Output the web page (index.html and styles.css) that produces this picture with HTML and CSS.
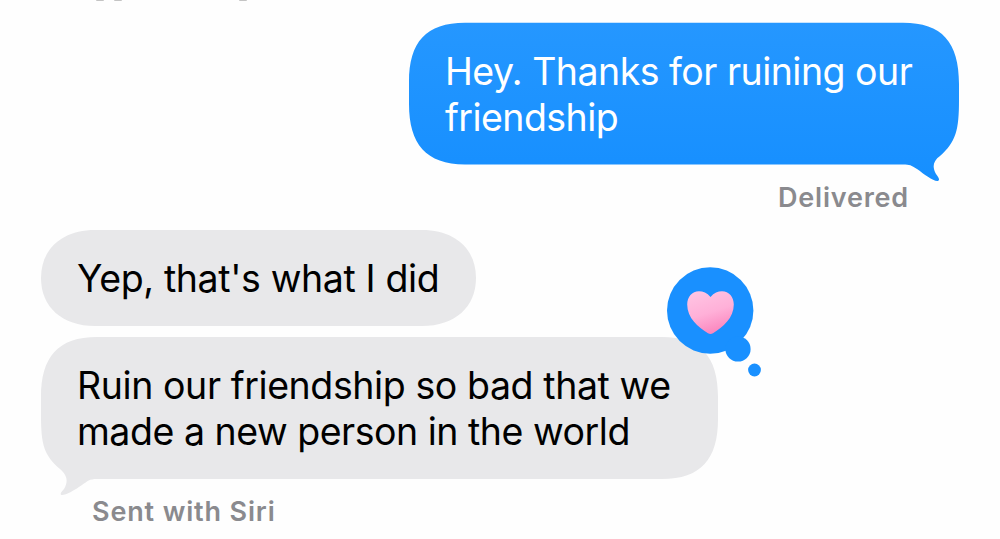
FILE: index.html
```html
<!DOCTYPE html>
<html lang="en">
<head>
    <meta charset="UTF-8">
    <meta name="viewport" content="width=device-width, initial-scale=1.0">
    <title>Messages</title>
    <link rel="stylesheet" href="styles.css">
</head>
<body>
    <div class="scroll-edge">
        <span class="edge-mark"></span>
        <span class="edge-mark"></span>
        <span class="edge-mark edge-mark-far"></span>
    </div>
    <main class="chat">
        <div class="bubble sent">
            <svg class="bubble-shape" width="550" height="160" viewBox="0 0 550 160">
                <defs>
                    <linearGradient id="blue" x1="0" y1="0" x2="0" y2="1">
                        <stop offset="0" stop-color="#2597ff"/>
                        <stop offset="1" stop-color="#168fff"/>
                    </linearGradient>
                </defs>
                <path fill="url(#blue)" d="M56 .7H494C533 .7 550 20 550 62V78C550 108 547 120 531 134C524 139 523 145 527 152C530 156 531 158 529 159C525 160 515 152 508 147C502 143 501 142.4 494 142.4H56C17 142.4 0 122 0 82V60C0 20 17 .7 56 .7Z"/>
            </svg>
            <p class="text">
                <span class="line line-hey">Hey. Thanks for ruining our</span>
                <span class="line line-friend">friendship</span>
            </p>
        </div>
        <p class="caption delivered">Delivered</p>

        <div class="bubble received short">
            <svg class="bubble-shape" width="435" height="96" viewBox="0 0 435 96">
                <path fill="#e8e8ea" d="M54 0H381C414 0 435 19 435 48S414 96 381 96H54C21 96 0 77 0 48S21 0 54 0Z"/>
            </svg>
            <p class="text"><span class="line line-yep">Yep, that's what I did</span></p>
        </div>

        <div class="bubble received long">
            <svg class="bubble-shape" width="677" height="160" viewBox="0 0 677 160">
                <path fill="#e8e8ea" d="M56 0H621C660 0 677 20 677 60V82C677 122 660 142 621 142H56C48 142 47 144 41 148C34 153 25 158 21 158C19 158 19 156 23 152C27 145 27 139 19 132C3 118 0 108 0 78V60C0 20 17 0 56 0Z"/>
            </svg>
            <p class="text">
                <span class="line line-ruin">Ruin our friendship so bad that we</span>
                <span class="line line-made">made a new person in the world</span>
            </p>
            <!-- Heart tapback -->
            <svg class="tapback" width="96" height="112" viewBox="0 0 96 112">
                <defs>
                    <linearGradient id="pink" x1=".3" y1="0" x2=".65" y2="1">
                        <stop offset="0" stop-color="#ffc3e2"/>
                        <stop offset=".5" stop-color="#ffb0d8"/>
                        <stop offset="1" stop-color="#fa82bb"/>
                    </linearGradient>
                </defs>
                <g fill="#1990ff">
                    <circle cx="43.2" cy="43.5" r="43.2"/>
                    <circle cx="71" cy="82" r="12.6"/>
                    <circle cx="87.5" cy="103" r="6.4"/>
                </g>
                <path fill="url(#pink)" d="M43.5 30C40 26 36 24.3 32 24.3C25 24.3 20.2 30 20.2 37.5C20.2 51 31 60 41 66.2Q43.5 67.6 46 66.2C56 60 66.8 51 66.8 37.5C66.8 30 62 24.3 55 24.3C51 24.3 47 26 43.5 30Z"/>
            </svg>
        </div>
        <p class="caption siri">Sent with Siri</p>
    </main>
</body>
</html>
```
FILE: styles.css
```css
* {
    box-sizing: border-box;
}
body {
    font-family: Inter, "Liberation Sans", sans-serif;
    margin: 0;
    height: 539px;
    overflow: hidden;
    background-color: #fefefe;
}
p {
    margin: 0;
}
.scroll-edge {
    display: flex;
    gap: 10px;
    height: 2px;
    padding-left: 96px;
}
.edge-mark {
    width: 8px;
    height: 1px;
    border-radius: 0 0 4px 4px;
    background-color: #c4c4c4;
}
.edge-mark-far {
    margin-left: 107px;
}
.chat {
    display: flex;
    flex-direction: column;
    align-items: flex-start;
    padding: 20px 41px 0;
}
.bubble {
    position: relative;
    padding: 26px 36px;
    font-size: 37.5px;
    line-height: 46px;
}
.bubble-shape {
    position: absolute;
    top: 0;
    left: 0;
}
.text {
    position: relative;
}
.line {
    display: block;
    width: max-content;
    white-space: nowrap;
}
.line-hey {
    letter-spacing: -0.52px;
}
.line-friend {
    letter-spacing: -0.55px;
}
.line-yep {
    letter-spacing: -0.37px;
}
.line-ruin {
    letter-spacing: -0.41px;
}
.line-made {
    letter-spacing: -0.48px;
}
.sent {
    align-self: flex-end;
    width: 550px;
    height: 143px;
    padding-top: 27px;
    color: #fff;
}
.received {
    color: #000;
}
.short {
    width: 435px;
    height: 96px;
    margin-top: 16px;
}
.long {
    width: 677px;
    height: 142px;
    margin-top: 11px;
}
.tapback {
    position: absolute;
    top: -70px;
    left: 626px;
}
.caption {
    font-size: 27px;
    font-weight: 600;
    line-height: 33px;
    color: #8a8a8e;
}
.delivered {
    align-self: flex-end;
    margin: 16px 50px 0 0;
    letter-spacing: 0.8px;
}
.siri {
    margin: 16px 0 0 51px;
    letter-spacing: 0.85px;
}
```
